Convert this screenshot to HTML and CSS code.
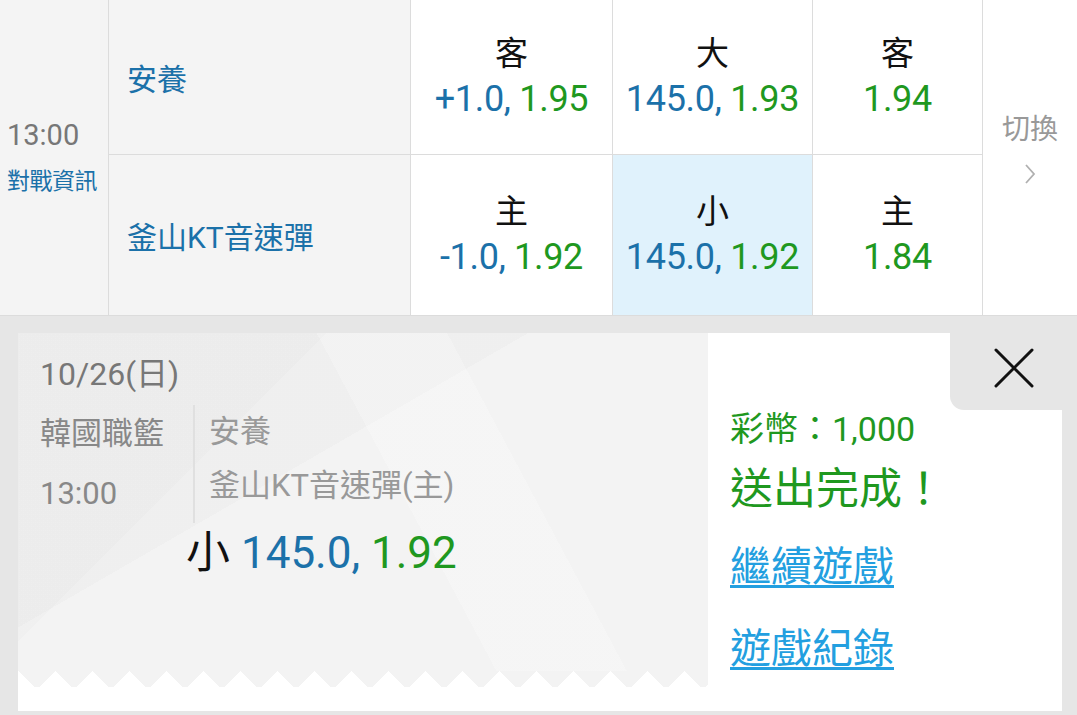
FILE: index.html
```html
<!DOCTYPE html>
<html lang="zh-Hant">
<head>
<meta charset="utf-8">
<title>投注</title>
<link rel="stylesheet" href="styles.css">
</head>
<body>
<div class="board">
  <div class="time-cell">
    <div class="time">13:00</div>
    <div class="info">對戰資訊</div>
  </div>
  <div class="team">安養</div>
  <div class="odd"><div class="lbl">客</div><div class="val"><span class="b">+1.0,</span> <span class="g">1.95</span></div></div>
  <div class="odd"><div class="lbl">大</div><div class="val"><span class="b">145.0,</span> <span class="g">1.93</span></div></div>
  <div class="odd"><div class="lbl">客</div><div class="val"><span class="g">1.94</span></div></div>
  <div class="switch">
    <div class="sw-text">切換</div>
    <svg class="chev" width="14" height="24" viewBox="0 0 14 24"><path d="M3 3 L11 12 L3 21" fill="none" stroke="#b0b0b0" stroke-width="1.8"/></svg>
  </div>
  <div class="team">釜山KT音速彈</div>
  <div class="odd"><div class="lbl">主</div><div class="val"><span class="b">-1.0,</span> <span class="g">1.92</span></div></div>
  <div class="odd sel"><div class="lbl">小</div><div class="val"><span class="b">145.0,</span> <span class="g">1.92</span></div></div>
  <div class="odd"><div class="lbl">主</div><div class="val"><span class="g">1.84</span></div></div>
</div>

<div class="lower">
  <div class="card">
    <div class="ticket">
      <div class="ticket-body">
        <div class="date">10/26(日)</div>
        <div class="match">
          <div class="league">
            <div class="line">韓國職籃</div>
            <div class="line">13:00</div>
          </div>
          <div class="teams">
            <div class="line">安養</div>
            <div class="line">釜山KT音速彈(主)</div>
          </div>
        </div>
        <div class="bet"><span class="k">小</span> <span class="b">145.0,</span> <span class="g">1.92</span></div>
      </div>
      <div class="zigzag"></div>
      <div class="ticket-foot"></div>
    </div>
    <div class="result">
      <div class="coins">彩幣：1,000</div>
      <div class="done">送出完成！</div>
      <a class="link" href="#">繼續遊戲</a>
      <a class="link" href="#">遊戲紀錄</a>
    </div>
  </div>
  <div class="close">
    <svg width="40" height="40" viewBox="0 0 40 40"><path d="M2 2 L38 38 M38 2 L2 38" stroke="#111" stroke-width="3" fill="none" stroke-linecap="round"/></svg>
  </div>
</div>
</body>
</html>
```
FILE: styles.css
```css
* { box-sizing: border-box; }
html, body { margin: 0; padding: 0; }
body {
  width: 1077px;
  height: 715px;
  overflow: hidden;
  background: #e6e6e6;
  font-family: Roboto, "Noto Sans CJK TC", sans-serif;
}
.b { color: #1b71a9; }
.g { color: #1f981f; }
.k { color: #111; }

.board {
  display: grid;
  grid-template-columns: 108px 301px 201px 199px 169px 94px;
  grid-template-rows: 154px 160px;
  gap: 1px;
  background: #dcdcdc;
  border-bottom: 1px solid #dcdcdc;
}
.time-cell {
  grid-row: 1 / span 2;
  background: #f4f4f4;
  display: flex;
  flex-direction: column;
  justify-content: center;
  padding: 0 0 0 7px;
}
.time { font-size: 29px; color: #777; line-height: 36px; }
.info { font-size: 23px; color: #1b71a9; line-height: 34px; margin-top: 12px; letter-spacing: -0.5px; }
.team {
  background: #f4f4f4;
  color: #1b71a9;
  font-size: 30px;
  display: flex;
  align-items: center;
  padding-left: 18px;
}
.odd {
  background: #fff;
  display: flex;
  flex-direction: column;
  align-items: center;
  justify-content: center;
}
.odd.sel { background: #e0f2fc; }
.lbl { font-size: 33px; color: #111; line-height: 44px; }
.val { font-size: 36px; line-height: 46px; letter-spacing: -0.3px; }
.switch {
  grid-row: 1 / span 2;
  grid-column: 6;
  background: #fff;
  display: flex;
  flex-direction: column;
  align-items: center;
  justify-content: center;
}
.sw-text { font-size: 28px; color: #999; line-height: 40px; margin-top: -20px; }
.chev { margin-top: 12px; }

.lower {
  position: relative;
  padding: 17px 15px 4px 18px;
}
.card {
  display: flex;
  height: 378px;
  background: #fff;
}
.ticket {
  width: 690px;
  display: flex;
  flex-direction: column;
}
.ticket-body {
  flex: 1;
  padding: 18px 0 0 22px;
  color: #888;
  background:
    linear-gradient(62deg, transparent 55%, rgba(255,255,255,0.22) 55%, rgba(255,255,255,0.22) 70%, transparent 70%),
    linear-gradient(135deg, rgba(0,0,0,0.012) 30%, transparent 30%),
    linear-gradient(-30deg, transparent 60%, rgba(0,0,0,0.015) 60%),
    #f3f3f3;
}
.date { font-size: 32px; line-height: 46px; color: #777; }
.match { display: flex; margin-top: 8px; }
.league { width: 153px; color: #888; }
.league .line { font-size: 31px; line-height: 58px; }
.league .line + .line { margin-top: 2px; }
.teams {
  border-left: 2px solid #e0e0e0;
  padding-left: 14px;
  color: #999;
}
.teams .line { font-size: 31px; line-height: 54px; }
.bet {
  font-size: 44px;
  line-height: 56px;
  margin: 2px 0 0 146px;
}
.zigzag {
  height: 16px;
  background:
    linear-gradient(135deg, #f3f3f3 25%, transparent 25%) -18px 0 / 37px 37px,
    linear-gradient(225deg, #f3f3f3 25%, transparent 25%) -18px 0 / 37px 37px,
    #fff;
  background-repeat: repeat-x;
}
.ticket-foot { height: 24px; background: #fff; }

.result {
  flex: 1;
  padding: 74px 0 0 22px;
  display: flex;
  flex-direction: column;
  align-items: flex-start;
}
.coins { font-size: 34px; color: #1f981f; line-height: 44px; }
.done { font-size: 43px; color: #1f981f; line-height: 60px; margin-top: 8px; }
.link {
  font-size: 41px;
  color: #239fe0;
  line-height: 56px;
  text-decoration: underline;
  text-decoration-thickness: 3px;
  text-underline-offset: 4px;
}
.link:first-of-type { margin-top: 20px; }
.link + .link { margin-top: 26px; }

.close {
  position: absolute;
  top: 0;
  right: 0;
  width: 127px;
  height: 94px;
  background: #e6e6e6;
  border-bottom-left-radius: 14px;
  display: flex;
  align-items: center;
  justify-content: center;
  padding-top: 10px;
}
```
